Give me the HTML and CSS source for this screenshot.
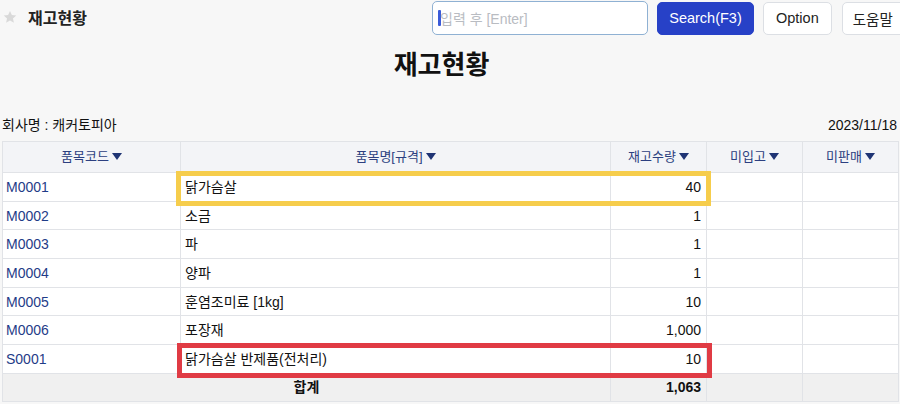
FILE: index.html
```html
<!DOCTYPE html>
<html lang="ko">
<head>
<meta charset="utf-8">
<title>재고현황</title>
<link rel="stylesheet" href="styles.css">
</head>
<body>
<div class="topbar">
  <div class="left">
    <svg class="star" width="14" height="14" viewBox="0 0 24 24"><path d="M12 1.5l3.2 7 7.6.8-5.7 5.1 1.6 7.5L12 18l-6.7 3.9 1.6-7.5L1.2 9.3l7.6-.8z" fill="#d9d9d9"/></svg>
    <span class="page-title">재고현황</span>
  </div>
  <div class="right">
    <div class="search"><span class="caret"></span><span class="ph">입력 후 [Enter]</span></div>
    <button class="btn primary">Search(F3)</button>
    <button class="btn">Option</button>
    <button class="btn help">도움말</button>
  </div>
</div>
<h1 class="report-title">재고현황</h1>
<div class="meta">
  <span>회사명 : 캐커토피아</span>
  <span>2023/11/18</span>
</div>
<div class="table-wrap">
  <table class="grid">
    <colgroup>
      <col class="c1"><col class="c2"><col class="c3"><col class="c4"><col class="c5">
    </colgroup>
    <thead>
      <tr>
        <th>품목코드<i class="tri"></i></th>
        <th>품목명[규격]<i class="tri"></i></th>
        <th>재고수량<i class="tri"></i></th>
        <th>미입고<i class="tri"></i></th>
        <th>미판매<i class="tri"></i></th>
      </tr>
    </thead>
    <tbody>
      <tr><td class="code">M0001</td><td>닭가슴살</td><td class="num">40</td><td></td><td></td></tr>
      <tr><td class="code">M0002</td><td>소금</td><td class="num">1</td><td></td><td></td></tr>
      <tr><td class="code">M0003</td><td>파</td><td class="num">1</td><td></td><td></td></tr>
      <tr><td class="code">M0004</td><td>양파</td><td class="num">1</td><td></td><td></td></tr>
      <tr><td class="code">M0005</td><td>훈염조미료 [1kg]</td><td class="num">10</td><td></td><td></td></tr>
      <tr><td class="code">M0006</td><td>포장재</td><td class="num">1,000</td><td></td><td></td></tr>
      <tr><td class="code">S0001</td><td>닭가슴살 반제품(전처리)</td><td class="num">10</td><td></td><td></td></tr>
    </tbody>
    <tfoot>
      <tr><td colspan="2" class="total-label">합계</td><td class="num total">1,063</td><td></td><td></td></tr>
    </tfoot>
  </table>
  <div class="mark yellow"></div>
  <div class="mark red"></div>
</div>
</body>
</html>
```
FILE: styles.css
```css
* { box-sizing: border-box; }
html, body {
  margin: 0;
  background: #f7f7f7;
  width: 900px;
  height: 404px;
  overflow: hidden;
  font-family: "Liberation Sans", "Noto Sans CJK KR", sans-serif;
  color: #111;
}
.topbar {
  display: flex;
  height: 38px;
  align-items: center;
  overflow: hidden;
}
.left {
  width: 432px;
  flex-shrink: 0;
  display: flex;
  align-items: center;
  padding-left: 3px;
  padding-bottom: 4px;
}
.star { margin-right: 11px; }
.page-title {
  font-size: 16px;
  font-weight: bold;
  color: #222;
}
.right {
  display: flex;
  align-items: center;
  flex-shrink: 0;
  gap: 9px;
  padding-bottom: 2px;
}
.search {
  width: 216px;
  height: 34px;
  border: 1px solid #8fb1d3;
  border-radius: 5px;
  background: #fff;
  display: flex;
  align-items: center;
  padding-left: 5px;
  font-size: 14px;
  color: #b9bcc2;
}
.caret {
  width: 3px;
  height: 16px;
  background: #3b5bd9;
  border-radius: 1px;
  margin-right: -1px;
}
.btn {
  height: 33px;
  border: 1px solid #dcdfe4;
  border-radius: 5px;
  background: #fff;
  font-family: inherit;
  font-size: 14.5px;
  color: #222;
  padding: 0 12px;
  flex-shrink: 0;
}
.btn.primary {
  background: #2741c7;
  border-color: #2741c7;
  color: #fff;
  width: 97px;
  padding: 0;
}
.btn.help { width: 64px; padding: 0 0 0 10px; text-align: left; margin-left: 1px; }
.report-title {
  margin: 4px 0 0;
  padding-right: 17px;
  text-align: center;
  font-size: 26px;
  font-weight: bold;
  line-height: 46px;
  color: #111;
}
.meta {
  display: flex;
  justify-content: space-between;
  padding: 0 3px 0 2px;
  margin-top: 27px;
  font-size: 14px;
  line-height: 20px;
  color: #111;
}
.table-wrap {
  position: relative;
  margin: 6px 0 0 2px;
  width: 896px;
}
.grid {
  border-collapse: collapse;
  width: 896px;
  table-layout: fixed;
  font-size: 14px;
}
.c1 { width: 178px; }
.c2 { width: 430px; }
.c3 { width: 96px; }
.c4 { width: 96px; }
.c5 { width: 96px; }
.grid th, .grid td {
  border: 1px solid #e1e3e7;
  padding: 0 4px;
  white-space: nowrap;
  line-height: 16px;
}
.grid tr.head, .grid thead tr { height: 31px; }
.grid tbody tr { height: 28.7px; }
.grid tfoot tr { height: 28px; }
.grid th {
  background: #f3f4f7;
  color: #2c3f80;
  font-weight: normal;
  font-size: 13px;
  text-align: center;
}
.tri {
  display: inline-block;
  width: 0;
  height: 0;
  border-left: 5px solid transparent;
  border-right: 5px solid transparent;
  border-top: 7px solid #1f3474;
  margin-left: 3px;
  vertical-align: 1px;
}
.grid tbody td { background: #fff; }
.grid td.code { color: #1f3c88; padding-left: 3px; }
.grid td.num { text-align: right; padding-right: 5px; }
.grid tfoot td { background: #f0f0f0; }
.total-label { text-align: center; font-weight: bold; }
.grid td.total { font-weight: bold; }
.mark {
  position: absolute;
  border: 5px solid;
  width: 535px;
  height: 35px;
}
.mark.yellow { border-color: #f6cd4c; left: 174px; top: 30px; }
.mark.red { border-color: #e03b44; left: 175px; top: 202px; }
```
